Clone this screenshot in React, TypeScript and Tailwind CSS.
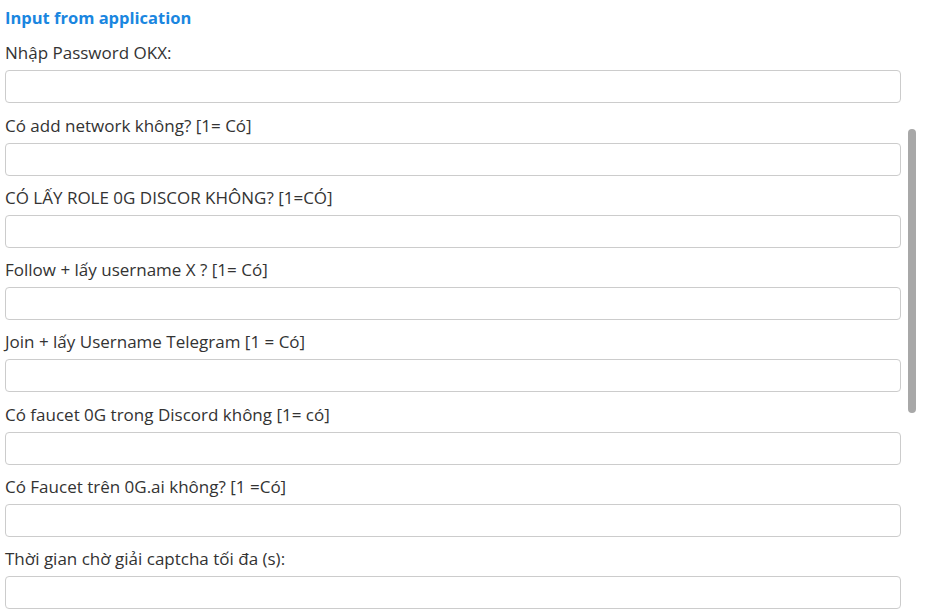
import React from "react";

const fields = [
  "Nhập Password OKX:",
  "Có add network không? [1= Có]",
  "CÓ LẤY ROLE 0G DISCOR KHÔNG? [1=CÓ]",
  "Follow + lấy username X ? [1= Có]",
  "Join + lấy Username Telegram [1 = Có]",
  "Có faucet 0G trong Discord không [1= có]",
  "Có Faucet trên 0G.ai không? [1 =Có]",
  "Thời gian chờ giải captcha tối đa (s):",
];

export default function App() {
  return (
    <div className="relative h-[612px] w-[927px] overflow-hidden bg-white font-['Segoe_UI','Open_Sans',sans-serif] text-[#333]">
      <div className="flex w-[901px] flex-col pl-[5px] pt-[6px]">
        <h3 className="mb-px text-[16.5px] font-bold leading-6 text-[#1a86e0]">Input from application</h3>
        {fields.map((label) => (
          <label key={label} className="mt-[10.3px] flex flex-col gap-[5px]">
            <span className="text-[17px] leading-6 text-[#333]">{label}</span>
            <input className="h-[33px] w-full rounded-[4px] border border-[#ccc] bg-white px-2 outline-none" />
          </label>
        ))}
      </div>
      <div className="absolute left-[908px] top-[129px] h-[284px] w-[8px] rounded-full bg-[#a8a8a8]" />
    </div>
  );
}
